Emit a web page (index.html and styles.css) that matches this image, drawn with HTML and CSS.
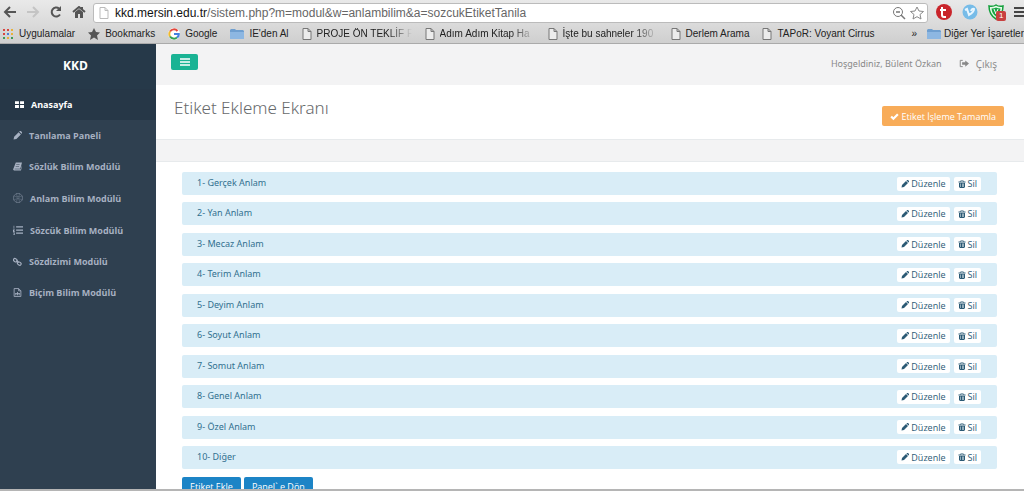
FILE: index.html
```html
<!DOCTYPE html>
<html lang="tr">
<head>
<meta charset="utf-8">
<title>Etiket Ekleme Ekranı</title>
<link rel="stylesheet" href="styles.css">
</head>
<body>
<svg class="sprite" aria-hidden="true">
  <symbol id="i-pencil" viewBox="0 0 16 16"><path d="M1 15l1-5 8-8 4 4-8 8zM11 1l1-1h2l2 2v2l-1 1z"/></symbol>
  <symbol id="i-trash" viewBox="0 0 16 16"><path fill-rule="evenodd" d="M1 3h4V1h6v2h4v2H1zM6 2v1h4V2zM2 6h12v8l-2 2H4l-2-2zM5 7v7h1V7zM8 7v7h1V7zM10 7v7h1V7z"/></symbol>
  <symbol id="i-page" viewBox="0 0 10 12"><path d="M1 .5h5l3 3v8H1zM6 .5v3h3" fill="#ececec" stroke="#777"/></symbol>
  <symbol id="i-folder" viewBox="0 0 14 12"><path d="M0 2l1-1h4l1 1h7l1 1v8H0z" fill="#6f9fd0"/><path d="M0 4h14v7H0z" fill="#8db7e2"/></symbol>
</svg>
<header class="browser">
  <div class="toolbar">
    <button class="tool" aria-label="Geri"><svg viewBox="0 0 14 12"><path d="M13 6H2M7 1L2 6l5 5" fill="none" stroke="#555" stroke-width="2"/></svg></button>
    <button class="tool" aria-label="İleri"><svg viewBox="0 0 14 12"><path d="M1 6h11M7 1l5 5-5 5" fill="none" stroke="#c4c4c4" stroke-width="2"/></svg></button>
    <button class="tool" aria-label="Yenile"><svg viewBox="0 0 14 12"><path d="M11 8.500A4.500 4.500 0 1 1 10 2.500" fill="none" stroke="#555" stroke-width="2"/><path d="M12 0v5H7z" fill="#555"/></svg></button>
    <button class="tool" aria-label="Ana sayfa"><svg viewBox="0 0 14 12"><path d="M1 6l6-5 6 5M10 1v3" fill="none" stroke="#555" stroke-width="2"/><path d="M3 6l4-3 4 3v6H8V8H6v4H3z" fill="#555"/></svg></button>
    <div class="address">
      <svg class="page-icon" viewBox="0 0 10 12"><path d="M1 .5h5l3 3v8H1zM6 .5v3h3" fill="#fff" stroke="#bbb"/></svg>
      <span class="url"><b>kkd.mersin.edu.tr</b>/sistem.php?m=modul&amp;w=anlambilim&amp;a=sozcukEtiketTanila</span>
      <svg class="address-icon" viewBox="0 0 14 14"><circle cx="6" cy="6" r="4.500" fill="none" stroke="#777"/><path d="M4 6h4M9 9l4 4" stroke="#777" stroke-width="1.500"/></svg>
      <svg class="address-icon" viewBox="0 0 14 14"><path d="M7 1l2 4 4.500.5L10 8.500l1 4.500-4-2.300L3 13l1-4.500L.5 5.500 5 5z" fill="#fff" stroke="#888"/></svg>
    </div>
    <svg class="extension" viewBox="0 0 16 16"><circle cx="8" cy="8" r="8" fill="#c9252b"/><path d="M6 3v8q0 2 2 2h2M4 6h6" fill="none" stroke="#fff" stroke-width="2"/></svg>
    <svg class="extension" viewBox="0 0 16 16"><circle cx="8" cy="8" r="7.500" fill="#77bce8"/><path d="M3 6l2-1 2 6q5-3 5-6-2-1-3 2" fill="none" stroke="#e8f6ff" stroke-width="2"/></svg>
    <span class="shield">
      <svg class="extension" viewBox="0 0 16 16"><path d="M8 1q3 2 7 1 0 9-7 13Q1 11 1 2q4 1 7-1z" fill="#e6fbe8" stroke="#14a03c" stroke-width="1.500"/><path d="M8 3.500q2 1 4.500 1Q12 10 8 12.500 4 10 3.500 4.500q3 0 4.500-1z" fill="#19a544"/><path d="M6 5l2 5 2-5" fill="none" stroke="#fff"/></svg>
      <span class="count">1</span>
    </span>
    <button class="menu" aria-label="Menü"><svg viewBox="0 0 12 12"><path d="M0 2h12M0 6h12M0 10h12" stroke="#444" stroke-width="2"/></svg></button>
  </div>
  <nav class="bookmarks" aria-label="Yer işaretleri">
    <a href="#"><svg viewBox="0 0 12 12"><path d="M1 1h2v2H1zM5 1h2v2H5zM1 5h2v2H1z" fill="#d8453e"/><path d="M9 1h2v2H9zM9 5h2v2H9zM5 9h2v2H5z" fill="#e8b13a"/><path d="M5 5h2v2H5z" fill="#4a7fd6"/><path d="M1 9h2v2H1zM9 9h2v2H9z" fill="#3d9b57"/></svg><span>Uygulamalar</span></a>
    <a href="#"><svg viewBox="0 0 12 12"><path d="M6 0l2 4 4 .5-3 3 1 4.500-4-2.500L2 12l1-4.500-3-3L4 4z" fill="#555"/></svg><span>Bookmarks</span></a>
    <a href="#"><svg viewBox="0 0 12 12"><circle cx="6" cy="6" r="6" fill="#fff"/><g fill="none" stroke-width="2"><path d="M2 3.500A4.700 4.700 0 0 1 9.500 3" stroke="#e2473c"/><path d="M2 3.500a5 5 0 0 0 0 5" stroke="#efb92f"/><path d="M2 8.500A4.700 4.700 0 0 0 9 9.500" stroke="#35a153"/><path d="M9 9.500Q11 8 10.800 6H6" stroke="#4380e0"/></g></svg><span>Google</span></a>
    <a href="#"><svg class="folder"><use href="#i-folder"/></svg><span>IE'den Al</span></a>
    <a href="#"><svg class="doc"><use href="#i-page"/></svg><span class="clip">PROJE ÖN TEKLİF F</span></a>
    <a href="#"><svg class="doc"><use href="#i-page"/></svg><span class="clip">Adım Adım Kitap Ha</span></a>
    <a href="#"><svg class="doc"><use href="#i-page"/></svg><span class="clip">İşte bu sahneler 190</span></a>
    <a href="#"><svg class="doc"><use href="#i-page"/></svg><span>Derlem Arama</span></a>
    <a href="#"><svg class="doc"><use href="#i-page"/></svg><span>TAPoR: Voyant Cirrus</span></a>
    <button class="more" aria-label="Diğer">»</button>
    <a href="#" class="other"><svg class="folder"><use href="#i-folder"/></svg><span>Diğer Yer İşaretler</span></a>
  </nav>
</header>
<div class="app">
  <aside class="sidebar">
    <div class="brand">KKD</div>
    <nav class="side-nav">
      <a class="active" href="#"><svg viewBox="0 0 16 16"><path d="M0 2h7v5H0zM9 2h7v5H9zM0 9h7v5H0zM9 9h7v5H9z"/></svg>Anasayfa</a>
      <a href="#"><svg><use href="#i-pencil"/></svg>Tanılama Paneli</a>
      <a href="#"><svg viewBox="0 0 16 16"><path fill-rule="evenodd" d="M5 1h11l-3 11H3v1h11l2-7v3l-2 6H2q-3-1-1-4zM6 4l-.5 1h6l.5-1zM5 7l-.5 1h6l.5-1z"/></svg>Sözlük Bilim Modülü</a>
      <a class="wide" href="#"><svg viewBox="0 0 16 16"><g fill="none" stroke="currentColor" opacity=".7"><path d="M5 1h6l4 4v6l-4 4H5l-4-4V5z"/><path d="M5 1l2 5L1 5M11 1L9 6l6-1M15 11L9 9l2 6M5 15l2-6-6 2M7 6h2l1 2-1 1H7L6 8z" opacity=".6"/></g></svg>Anlam Bilim Modülü</a>
      <a class="wide" href="#"><svg viewBox="0 0 16 16"><path d="M5 2h11v2H5zM5 7h11v2H5zM5 12h11v2H5zM1 1h1v5H1zM0 7h3v1L1 10h2v1H0zM0 12h3v4H0v-1h2v-2H0z"/></svg>Sözcük Bilim Modülü</a>
      <a href="#"><svg viewBox="0 0 16 16"><g fill="none" stroke="currentColor" stroke-width="2"><rect x="1" y="3" width="7" height="5" rx="2.500" transform="rotate(35 4 5)"/><rect x="8" y="9" width="7" height="5" rx="2.500" transform="rotate(35 11 11)"/><path d="M6 6l4 4"/></g></svg>Sözdizimi Modülü</a>
      <a href="#"><svg viewBox="0 0 16 16"><path d="M2 1h8l4 4v10H2zM10 1v4h4M5 13V9M8 13V7M11 13V9M4 10h8" fill="none" stroke="currentColor" stroke-width="1.500"/></svg>Biçim Bilim Modülü</a>
    </nav>
  </aside>
  <main class="page">
    <div class="topbar">
      <button class="toggle" aria-label="Menüyü daralt"><svg viewBox="0 0 10 8"><path d="M0 1h10M0 4h10M0 7h10" stroke="#fff" stroke-width="1.500"/></svg></button>
      <span class="welcome">Hoşgeldiniz, Bülent Özkan</span>
      <a class="logout" href="#"><svg viewBox="0 0 16 14"><path d="M6 2H2v10h4" fill="none" stroke="currentColor" stroke-width="1.500"/><path d="M5 5h5V2l6 5-6 5V9H5z"/></svg>Çıkış</a>
    </div>
    <div class="heading">
      <h1>Etiket Ekleme Ekranı</h1>
      <button class="complete"><svg viewBox="0 0 16 16"><path d="M2 8l4 4 8-8" fill="none" stroke="#fff" stroke-width="4"/></svg>Etiket İşleme Tamamla</button>
    </div>
    <section class="content">
      <ul class="tags">
        <li><span>1- Gerçek Anlam</span><button><svg><use href="#i-pencil"/></svg>Düzenle</button><button><svg><use href="#i-trash"/></svg>Sil</button></li>
        <li><span>2- Yan Anlam</span><button><svg><use href="#i-pencil"/></svg>Düzenle</button><button><svg><use href="#i-trash"/></svg>Sil</button></li>
        <li><span>3- Mecaz Anlam</span><button><svg><use href="#i-pencil"/></svg>Düzenle</button><button><svg><use href="#i-trash"/></svg>Sil</button></li>
        <li><span>4- Terim Anlam</span><button><svg><use href="#i-pencil"/></svg>Düzenle</button><button><svg><use href="#i-trash"/></svg>Sil</button></li>
        <li><span>5- Deyim Anlam</span><button><svg><use href="#i-pencil"/></svg>Düzenle</button><button><svg><use href="#i-trash"/></svg>Sil</button></li>
        <li><span>6- Soyut Anlam</span><button><svg><use href="#i-pencil"/></svg>Düzenle</button><button><svg><use href="#i-trash"/></svg>Sil</button></li>
        <li><span>7- Somut Anlam</span><button><svg><use href="#i-pencil"/></svg>Düzenle</button><button><svg><use href="#i-trash"/></svg>Sil</button></li>
        <li><span>8- Genel Anlam</span><button><svg><use href="#i-pencil"/></svg>Düzenle</button><button><svg><use href="#i-trash"/></svg>Sil</button></li>
        <li><span>9- Özel Anlam</span><button><svg><use href="#i-pencil"/></svg>Düzenle</button><button><svg><use href="#i-trash"/></svg>Sil</button></li>
        <li><span>10- Diğer</span><button><svg><use href="#i-pencil"/></svg>Düzenle</button><button><svg><use href="#i-trash"/></svg>Sil</button></li>
      </ul>
      <div class="actions"><button>Etiket Ekle</button><button>Panel` e Dön</button></div>
    </section>
  </main>
</div>
</body>
</html>
```
FILE: styles.css
```css
* { box-sizing: border-box; }
body {
  margin: 0;
  height: 100vh;
  display: flex;
  flex-direction: column;
  overflow: hidden;
  font-family: "Open Sans", sans-serif;
  font-size: 9px;
  color: #676a6c;
  background: #fff;
}
a { color: inherit; text-decoration: none; }
button { font: inherit; color: inherit; border: 0; padding: 0; margin: 0; background: none; }
svg { display: block; flex: none; fill: currentColor; }
.sprite { position: absolute; width: 0; height: 0; }

.browser {
  background: linear-gradient(#e9e9e9, #cfcfcf);
  border-bottom: 1px solid #aaa;
  font-family: "Liberation Sans", Arial, sans-serif;
  color: #222;
}
.toolbar { display: flex; align-items: center; height: 24px; padding-left: 3px; }
.tool { width: 23px; }
.tool svg { width: 14px; height: 12px; }
.address {
  flex: 1;
  min-width: 0;
  display: flex;
  align-items: center;
  height: 20px;
  margin: 1px 8px 0 -2px;
  padding: 0 3px 0 5px;
  background: #fff;
  border: 1px solid #bbb;
  border-radius: 3px;
  gap: 4px;
}
.page-icon { width: 10px; height: 12px; }
.url { flex: 1; font-size: 12px; color: #666; white-space: nowrap; overflow: hidden; margin-left: 2px; }
.url b { font-weight: 400; color: #111; }
.address-icon { width: 14px; height: 14px; }
.extension { width: 16px; height: 16px; margin-right: 10px; }
.shield { position: relative; }
.count {
  position: absolute;
  left: 8px;
  top: 7px;
  padding: 0 3px;
  border-radius: 2px;
  background: #c8403f;
  color: #fff;
  font-size: 8px;
  line-height: 10px;
}
.menu { width: 10px; overflow: hidden; }
.menu svg { width: 12px; height: 12px; }
.bookmarks {
  display: flex;
  align-items: center;
  gap: 13px;
  height: 19px;
  padding-left: 2px;
  font-size: 10px;
  line-height: 16px;
  white-space: nowrap;
}
.bookmarks a { display: flex; align-items: center; gap: 5px; flex: none; }
.bookmarks svg { width: 12px; height: 12px; }
.bookmarks .folder { width: 14px; }
.bookmarks .doc { width: 10px; }
.clip { width: 95px; mask-image: linear-gradient(90deg, #000 75%, transparent); }
.more { margin-left: auto; }
.bookmarks .other { gap: 3px; margin-left: -3px; }

.app { flex: 1; min-height: 0; display: flex; border-bottom: 2px solid #b5b5b5; }
.sidebar { width: 156px; flex: none; background: #2f4050; color: #a7b1c2; font-weight: 700; }
.brand {
  height: 45px;
  padding-right: 5px;
  line-height: 44px;
  text-align: center;
  font-size: 12px;
  color: #fff;
  background: #263949;
}
.side-nav a { display: flex; align-items: center; gap: 7px; height: 31px; padding-left: 13px; font-size: 9px; white-space: nowrap; }
.side-nav svg { width: 9px; height: 9px; }
.side-nav .wide { height: 32px; }
.side-nav .wide svg { width: 10px; height: 10px; }
.side-nav .active { padding-left: 15px; color: #fff; background: #263747; }

.page { flex: 1; min-width: 0; display: flex; flex-direction: column; background: #f3f3f4; }
.topbar { display: flex; align-items: center; height: 41px; padding: 0 27px 2px 15px; font-size: 10px; color: #888; }
.toggle { display: grid; place-items: center; width: 27px; height: 16px; margin-bottom: 4px; border-radius: 2px; background: #1ab394; }
.toggle svg { width: 10px; height: 8px; }
.welcome { margin-left: auto; font-family: "Noto Sans", sans-serif; font-size: 9px; }
.logout { display: flex; align-items: center; gap: 7px; margin-left: 17px; }
.logout svg { width: 10px; height: 9px; }
.heading { display: flex; justify-content: space-between; align-items: flex-start; height: 55px; padding: 11px 20px 0 18px; background: #fff; border-bottom: 1px solid #e7eaec; }
h1 { margin: 0; font-family: "Noto Sans", sans-serif; font-size: 17px; line-height: 24px; font-weight: 300; }
.complete { display: flex; align-items: center; gap: 2px; height: 20px; margin-top: 10px; padding: 0 8px; border-radius: 2px; background: #f8ac59; color: #fff; font-weight: 500; }
.complete svg { width: 9px; height: 9px; }
.content { flex: 1; min-height: 0; display: flex; flex-direction: column; margin-top: 21px; padding: 10px 27px 0 26px; background: #fff; border-top: 1px solid #e7eaec; overflow: hidden; }
.tags { flex: 1; display: flex; flex-direction: column; justify-content: space-between; list-style: none; margin: 0; padding: 0; }
.tags li { display: flex; align-items: center; gap: 4px; height: 23px; padding: 0 16px 0 15px; border-radius: 2px; background: #d9edf7; color: #31708f; }
.tags span { flex: 1; padding-bottom: 2px; font-family: "Noto Sans", sans-serif; }
.tags button { display: flex; align-items: center; gap: 2px; height: 14px; padding: 0 4px; border-radius: 2px; background: #fff; color: #2b5a75; }
.tags button svg { width: 8px; height: 8px; }
.actions { display: flex; gap: 3px; height: 20px; padding-top: 8px; }
.actions button { flex: none; height: 19px; padding: 0 8px; border-radius: 2px; background: #1c84c6; color: #fff; font-weight: 500; }
```
